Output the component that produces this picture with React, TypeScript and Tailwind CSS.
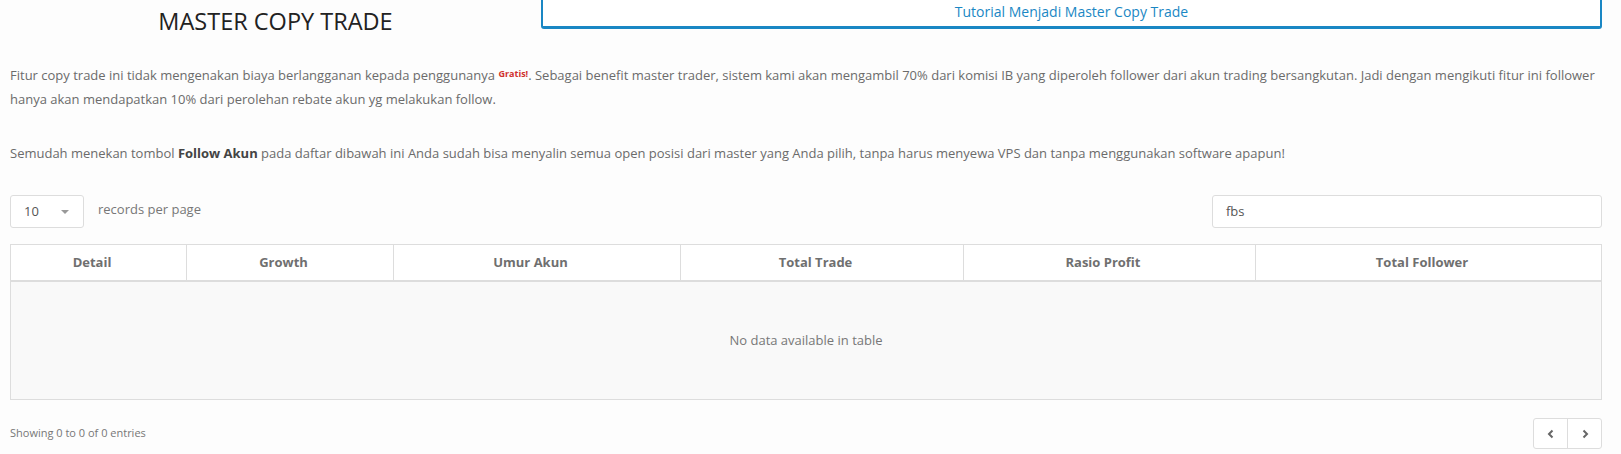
import React from "react";

const cols: { label: string; w: string }[] = [
  { label: "Detail", w: "w-[176px]" },
  { label: "Growth", w: "w-[207px]" },
  { label: "Umur Akun", w: "w-[287px]" },
  { label: "Total Trade", w: "w-[283px]" },
  { label: "Rasio Profit", w: "w-[292px]" },
  { label: "Total Follower", w: "" },
];

export default function App() {
  return (
    <div
      className="w-[1621px] h-[454px] overflow-hidden bg-[#fdfdfd] text-[#6b6b6b] pl-[10px] pr-[19px]"
      style={{ fontFamily: '"Open Sans", "Liberation Sans", sans-serif' }}
    >
      {/* header row */}
      <div className="flex h-[30px]">
        <div className="w-[531px] flex justify-center">
          <h1 className="text-[23.5px] leading-[30px] text-[#222] pt-[6px]">MASTER COPY TRADE</h1>
        </div>
        <div className="flex-1">
          <div className="h-[29px] border-x-2 border-b-[3px] border-[#1a87c4] rounded-b-[3px] bg-white flex items-end justify-center pb-[5px]">
            <span className="text-[14px] leading-[18px] text-[#1a87c4]">Tutorial Menjadi Master Copy Trade</span>
          </div>
        </div>
      </div>

      {/* paragraphs */}
      <div className="pt-[33px] text-[13px] leading-[24px]">
        <p>
          Fitur copy trade ini tidak mengenakan biaya berlangganan kepada penggunanya{" "}
          <sup className="text-[9px] leading-none font-bold text-[#d0312d] relative -top-[3px]">Gratis!</sup>. Sebagai benefit master trader,
          sistem kami akan mengambil 70% dari komisi IB yang diperoleh follower dari akun trading bersangkutan. Jadi dengan
          mengikuti fitur ini follower hanya akan mendapatkan 10% dari perolehan rebate akun yg melakukan follow.
        </p>
        <p className="mt-[30px]">
          Semudah menekan tombol <b className="text-[#444]">Follow Akun</b> pada daftar dibawah ini Anda sudah bisa menyalin
          semua open posisi dari master yang Anda pilih, tanpa harus menyewa VPS dan tanpa menggunakan software apapun!
        </p>
      </div>

      {/* controls */}
      <div className="mt-[30px] flex items-center justify-between h-[33px]">
        <div className="flex items-center">
          <div className="w-[74px] h-[33px] border border-[#ddd] rounded-[3px] bg-white flex items-center justify-between pl-[13px] pr-[14px]">
            <span className="text-[13px] text-[#555]">10</span>
            <span className="w-0 h-0 border-x-[4px] border-x-transparent border-t-[4px] border-t-[#999]" />
          </div>
          <span className="ml-[14px] text-[13px] text-[#777] -mt-[4px]">records per page</span>
        </div>
        <div className="w-[390px] h-[33px] border border-[#ddd] rounded-[3px] bg-white flex items-center pl-[13px]">
          <span className="text-[13px] text-[#555]">fbs</span>
        </div>
      </div>

      {/* table */}
      <table className="mt-[16px] w-[1592px] border-collapse table-fixed text-[13px]">
        <thead>
          <tr className="bg-white">
            {cols.map((c) => (
              <th
                key={c.label}
                className={`${c.w} h-[36px] border border-[#ddd] border-b-2 font-bold text-[#6f6f6f] text-center pr-[13px]`}
              >
                {c.label}
              </th>
            ))}
          </tr>
        </thead>
        <tbody>
          <tr className="bg-[#f9f9f9]">
            <td colSpan={6} className="h-[119px] border border-[#ddd] text-center text-[#777]">
              No data available in table
            </td>
          </tr>
        </tbody>
      </table>

      {/* footer */}
      <div className="mt-[18px] flex items-center justify-between">
        <span className="text-[11px] text-[#777]">Showing 0 to 0 of 0 entries</span>
        <div className="flex h-[31px] border border-[#ddd] rounded-[3px] bg-white">
          <div className="w-[34px] flex items-center justify-center border-r border-[#ddd]">
            <svg width="10" height="10" viewBox="0 0 10 10">
              <path d="M6.5 1.5 L3 5 L6.5 8.5" stroke="#666" strokeWidth="2" fill="none" />
            </svg>
          </div>
          <div className="w-[33px] flex items-center justify-center">
            <svg width="10" height="10" viewBox="0 0 10 10">
              <path d="M3.5 1.5 L7 5 L3.5 8.5" stroke="#666" strokeWidth="2" fill="none" />
            </svg>
          </div>
        </div>
      </div>
    </div>
  );
}
